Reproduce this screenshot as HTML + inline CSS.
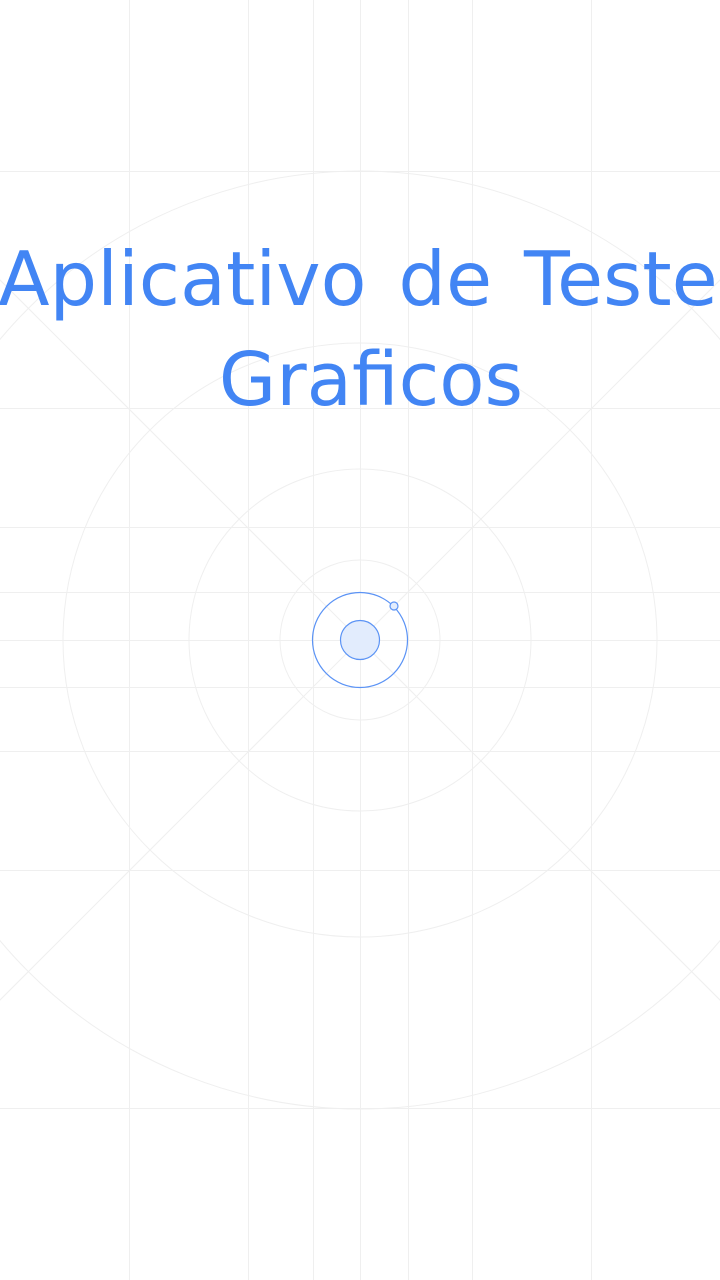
<!DOCTYPE html>
<html><head><meta charset="utf-8"><style>
html,body{margin:0;padding:0;background:#fff;width:720px;height:1280px;overflow:hidden}
svg{display:block}
</style></head><body>
<svg width="720" height="1280" xmlns="http://www.w3.org/2000/svg">
<g stroke="#efefef" stroke-width="1" fill="none">
<line x1="129.5" y1="0" x2="129.5" y2="1280"/>
<line x1="248.5" y1="0" x2="248.5" y2="1280"/>
<line x1="313.5" y1="0" x2="313.5" y2="1280"/>
<line x1="360.5" y1="0" x2="360.5" y2="1280"/>
<line x1="408.5" y1="0" x2="408.5" y2="1280"/>
<line x1="472.5" y1="0" x2="472.5" y2="1280"/>
<line x1="591.5" y1="0" x2="591.5" y2="1280"/>
<line x1="0" y1="171.5" x2="720" y2="171.5"/>
<line x1="0" y1="408.5" x2="720" y2="408.5"/>
<line x1="0" y1="527.5" x2="720" y2="527.5"/>
<line x1="0" y1="592.5" x2="720" y2="592.5"/>
<line x1="0" y1="640.5" x2="720" y2="640.5"/>
<line x1="0" y1="687.5" x2="720" y2="687.5"/>
<line x1="0" y1="751.5" x2="720" y2="751.5"/>
<line x1="0" y1="870.5" x2="720" y2="870.5"/>
<line x1="0" y1="1108.5" x2="720" y2="1108.5"/>
<line x1="-360" y1="-80" x2="1080" y2="1360"/>
<line x1="1080" y1="-80" x2="-360" y2="1360"/>
<circle cx="360" cy="640" r="80"/>
<circle cx="360" cy="640" r="171"/>
<circle cx="360" cy="640" r="297"/>
<circle cx="360" cy="640" r="469"/>
</g>
<circle cx="360" cy="640" r="47.5" fill="none" stroke="#5b93f5" stroke-width="1.2"/>
<circle cx="360" cy="640" r="19.5" fill="#e2ecfd" stroke="#5b93f5" stroke-width="1.2"/>
<circle cx="394" cy="606" r="4" fill="#e2ecfd" stroke="#5b93f5" stroke-width="1.2"/>
<g fill="#4285f4" font-family="DejaVu Sans, sans-serif" text-anchor="middle">
<text x="358" y="305" font-size="75" word-spacing="8">Aplicativo de Teste</text>
<text x="371" y="405" font-size="74">Graficos</text>
</g>
</svg>
</body></html>
